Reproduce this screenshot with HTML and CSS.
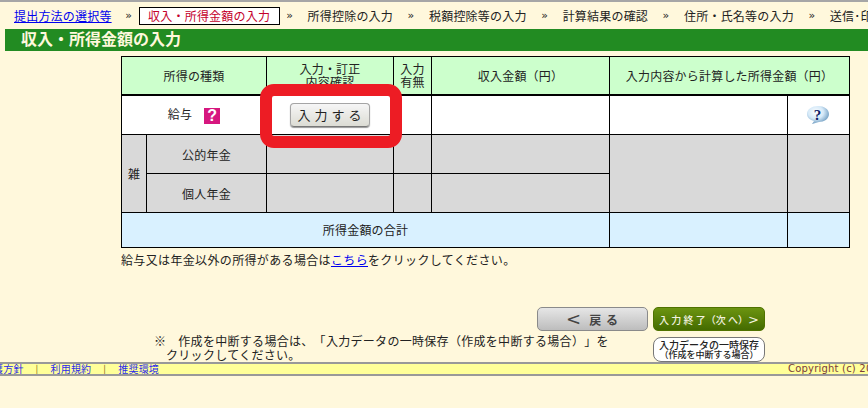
FILE: index.html
```html
<!DOCTYPE html>
<html lang="ja">
<head>
<meta charset="utf-8">
<title>収入・所得金額の入力</title>
<link rel="stylesheet" href="styles.css">
</head>
<body>
<nav class="steps">
  <a class="step-link" href="#">提出方法の選択等</a><span class="sep first">»</span>
  <span class="current">収入・所得金額の入力</span><span class="sep">»</span>
  <span class="step">所得控除の入力</span><span class="sep">»</span>
  <span class="step">税額控除等の入力</span><span class="sep">»</span>
  <span class="step">計算結果の確認</span><span class="sep">»</span>
  <span class="step">住所・氏名等の入力</span><span class="sep">»</span>
  <span class="step">送信･印刷等</span>
</nav>
<h1 class="title">収入・所得金額の入力</h1>
<main class="content">
  <div class="table-wrap">
    <table class="income">
      <colgroup>
        <col class="c1"><col class="c2"><col class="c3"><col class="c4"><col class="c5"><col class="c6"><col class="c7">
      </colgroup>
      <thead>
        <tr class="head">
          <th colspan="2">所得の種類</th>
          <th>入力・訂正<br>内容確認</th>
          <th>入力<br>有無</th>
          <th>収入金額（円）</th>
          <th colspan="2">入力内容から計算した所得金額（円）</th>
        </tr>
      </thead>
      <tbody>
        <tr class="r1">
          <td colspan="2"><span class="salary">給与</span><span class="badge">?</span></td>
          <td><button class="enter" type="button">入力する</button></td>
          <td></td><td></td><td></td>
          <td>
            <svg class="bubble" width="24" height="20" viewBox="0 0 24 20" aria-hidden="true">
              <defs><radialGradient id="bg" cx="0.4" cy="0.35" r="0.7"><stop offset="0" stop-color="#ffffff"/><stop offset="0.5" stop-color="#d5e9f8"/><stop offset="1" stop-color="#5f90b8"/></radialGradient></defs>
              <path d="M12 1C18 1 23 4 23 9s-5 8-10 8L6 19l2-3C4 15 1 12.500 1 9 1 4 6 1 12 1z" fill="url(#bg)"/>
              <text x="11.500" y="15" class="bubble-q">?</text>
            </svg>
          </td>
        </tr>
        <tr class="gray r2">
          <td class="zatsu" rowspan="2">雑</td>
          <td>公的年金</td><td></td><td></td><td></td>
          <td rowspan="2"></td><td rowspan="2"></td>
        </tr>
        <tr class="gray r2">
          <td>個人年金</td><td></td><td></td><td></td>
        </tr>
        <tr class="total">
          <td colspan="5">所得金額の合計</td><td></td><td></td>
        </tr>
      </tbody>
    </table>
    <div class="highlight"></div>
  </div>
  <p class="other">給与又は年金以外の所得がある場合は<a href="#">こちら</a>をクリックしてください。</p>
  <div class="actions">
    <p class="note"><span class="mark">※</span>作成を中断する場合は、「入力データの一時保存（作成を中断する場合）」を<br><span class="cont">クリックしてください。</span></p>
    <div class="btns">
      <div class="btn-row">
        <button class="btn back" type="button"><span class="lt">&lt;</span>戻 る</button>
        <button class="btn next" type="button">入 力 終 了（次 へ）<span class="gt">&gt;</span></button>
      </div>
      <button class="btn save" type="button">入力データの一時保存<small>（作成を中断する場合）</small></button>
    </div>
  </div>
</main>
<footer class="foot">
  <div class="foot-links">
    <a href="#">個人情報保護方針</a><span class="bar">|</span><a href="#">利用規約</a><span class="bar">|</span><a href="#">推奨環境</a>
  </div>
  <div class="copy">Copyright (c) 2023 National Tax Agency Japan</div>
</footer>
</body>
</html>
```
FILE: styles.css
```css
* { box-sizing: border-box; }
html, body { margin: 0; height: 100%; }
body {
  width: 868px;
  height: 408px;
  overflow: hidden;
  background: #fff8dc;
  color: #222;
  font-family: "Noto Sans CJK JP", "Liberation Sans", sans-serif;
  font-size: 12px;
  letter-spacing: 0.2px;
  text-spacing-trim: space-all;
  border-top: 2px solid #a6a6a6;
}
.steps {
  display: flex;
  align-items: center;
  height: 27px;
  padding-left: 14px;
  white-space: nowrap;
  line-height: 16px;
}
.step-link { color: #0000ee; text-decoration: underline; }
.sep { width: 28px; flex: none; text-align: center; font-size: 11px; font-family: "DejaVu Sans", sans-serif; }
.sep.first { padding-left: 6px; }
.current {
  flex: none;
  width: 141px;
  height: 18px;
  line-height: 16px;
  border: 1px solid #000;
  background: #fff;
  color: #c4002b;
  text-align: center;
  margin: 0 -4px 0 -1px;
}
.step { flex: none; margin-left: 4px; margin-right: 4px; }
.title {
  margin: 0 0 5px 5px;
  height: 22px;
  padding-left: 16px;
  background: #228b22;
  color: #fff8dc;
  font-size: 16px;
  letter-spacing: 0;
  font-weight: 700;
  line-height: 18px;
}
.content { padding-left: 121px; }
.table-wrap { position: relative; width: 728px; }
.income {
  width: 728px;
  table-layout: fixed;
  border-collapse: collapse;
  border: 1px solid #000;
  text-align: center;
}
.c1 { width: 25px; }
.c2 { width: 120px; }
.c3 { width: 127px; }
.c4 { width: 38px; }
.c5 { width: 178px; }
.c6 { width: 178px; }
.c7 { width: 62px; }
.income th, .income td { border: 1px solid #000; padding: 0; }
.income th { font-weight: 400; background: #ccffcc; line-height: 13px; }
.head { height: 38px; }
.r1 { height: 40px; background: #fff; }
.r1 td { border-top-width: 2px; }
.r2 { height: 39px; }
.gray { background: #d9d9d9; }
.total { height: 35px; background: #d9f1ff; }
.total td { padding-bottom: 2px; }
.salary { margin-right: 12px; }
.badge {
  display: inline-block;
  width: 16px;
  height: 16px;
  background: #d6177f;
  color: #fff;
  font: 700 16px/16px "Liberation Sans", sans-serif;
  text-align: center;
  vertical-align: middle;
}
.bubble { display: block; margin: 0 auto; position: relative; left: -1px; }
.bubble-q { font: 700 15px "Liberation Serif", serif; fill: #0c1a66; text-anchor: middle; }
.enter {
  display: block;
  width: 80px;
  height: 24px;
  margin: 0 auto;
  padding: 0 0 0 3px;
  border: 1px solid #a5a5a5;
  border-radius: 4px;
  border-bottom-color: #777;
  background: linear-gradient(#f6f6f6, #dcdcd4);
  color: #222;
  font: 13px/20px "Noto Sans CJK JP", sans-serif;
  letter-spacing: 4px;
  box-shadow: 0 1px 1px #999;
}
.highlight {
  position: absolute;
  left: 139px;
  top: 28px;
  width: 142px;
  height: 64px;
  border: 12.500px solid #ed1c24;
  border-radius: 14px;
}
.other { margin: 4px 0 0; line-height: 16px; letter-spacing: 0.35px; }
.actions {
  display: flex;
  margin-top: 39px;
  height: 56px;
  width: 644px;
  padding-left: 33px;
}
.note { margin: 27px 0 0; width: 383px; flex: none; line-height: 13.500px; white-space: nowrap; letter-spacing: 0.3px; }
.mark { margin-right: 12px; }
.cont { margin-left: 12px; }
.btns { display: flex; flex-direction: column; gap: 6px; align-items: flex-end; flex: none; width: 228px; }
.btn-row { display: flex; gap: 5px; }
.btn { padding: 0; border-radius: 5px; font-family: "Noto Sans CJK JP", sans-serif; white-space: nowrap; }
.back {
  width: 111px;
  height: 24px;
  border: 1px solid #8a8a8a;
  background: linear-gradient(#e6e6e6, #bdbdbd);
  color: #444;
  font-size: 12px;
  font-weight: 700;
  letter-spacing: 1px;
}
.lt { margin-right: 7px; font-size: 18px; line-height: 14px; font-weight: 400; font-family: "DejaVu Sans", sans-serif; }
.next {
  width: 112px;
  height: 24px;
  border: 1px solid #4f7200;
  background: linear-gradient(#6c9410, #446b00);
  color: #f3f3e0;
  font-size: 10px;
  font-weight: 500;
  letter-spacing: 0;
}
.gt { font-size: 13px; line-height: 12px; font-family: "DejaVu Sans", sans-serif; }
.save {
  width: 112px;
  height: 25px;
  border: 1px solid #777;
  border-radius: 8px;
  background: #fff;
  color: #222;
  font-size: 10px;
  line-height: 11px;
  font-weight: 500;
  letter-spacing: 0;
}
.save small { display: block; font-size: 9px; line-height: 10px; }
.foot {
  display: flex;
  justify-content: space-between;
  height: 14px;
  margin-top: -1px;
  border-top: 2px solid #999;
  border-bottom: 2px solid #999;
  background: #ffff99;
  font-size: 10px;
  line-height: 10px;
  white-space: nowrap;
  overflow: hidden;
}
.foot-links { margin-left: -58px; }
.foot-links a { color: #2a2aee; text-decoration: underline; }
.bar { margin: 0 12px; color: #8a6a20; }
.copy { width: 80px; flex: none; overflow: hidden; font-family: "DejaVu Sans", sans-serif; color: #7a3b3b; }
```
